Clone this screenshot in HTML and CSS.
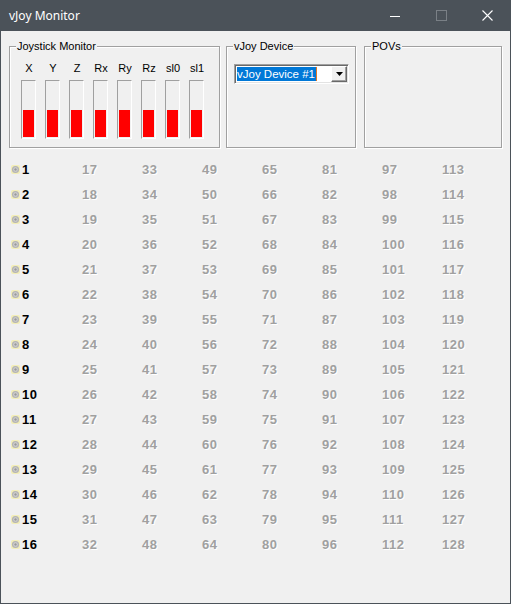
FILE: index.html
```html
<!DOCTYPE html>
<html>
<head>
<meta charset="utf-8">
<link rel="stylesheet" href="styles.css">
</head>
<body>
<div class="window">
  <div class="titlebar">
    <span class="title">vJoy Monitor</span>
    <div class="controls">
      <span class="ctl"><svg width="10" height="10" viewBox="0 0 10 10"><line x1="0" y1="5.5" x2="10" y2="5.5" stroke="#fff" stroke-width="1"/></svg></span>
      <span class="ctl"><svg width="11" height="11" viewBox="0 0 11 11"><rect x="0.5" y="0.5" width="10" height="10" fill="none" stroke="#7a8086" stroke-width="1"/></svg></span>
      <span class="ctl"><svg width="11" height="11" viewBox="0 0 11 11"><path d="M0.5 0.5 L10.5 10.5 M10.5 0.5 L0.5 10.5" stroke="#fff" stroke-width="1.1"/></svg></span>
    </div>
  </div>
  <div class="client">
    <div class="groups">
      <div class="group g-joy">
        <div class="legend">Joystick Monitor</div>
        <div class="axes">
          <div class="axis"><span class="axis-name">X</span><div class="bar"><div class="fill" style="height:27px"></div></div></div>
          <div class="axis"><span class="axis-name">Y</span><div class="bar"><div class="fill" style="height:27px"></div></div></div>
          <div class="axis"><span class="axis-name">Z</span><div class="bar"><div class="fill" style="height:27px"></div></div></div>
          <div class="axis"><span class="axis-name">Rx</span><div class="bar"><div class="fill" style="height:27px"></div></div></div>
          <div class="axis"><span class="axis-name">Ry</span><div class="bar"><div class="fill" style="height:27px"></div></div></div>
          <div class="axis"><span class="axis-name">Rz</span><div class="bar"><div class="fill" style="height:27px"></div></div></div>
          <div class="axis"><span class="axis-name">sl0</span><div class="bar"><div class="fill" style="height:27px"></div></div></div>
          <div class="axis"><span class="axis-name">sl1</span><div class="bar"><div class="fill" style="height:27px"></div></div></div>
        </div>
      </div>
      <div class="group g-dev">
        <div class="legend">vJoy Device</div>
        <div class="combo">
          <div class="combo-field"><span class="sel">vJoy Device #1</span><span class="caret"></span></div>
          <div class="combo-btn"><svg width="7" height="4" viewBox="0 0 7 4"><path d="M0 0 H7 L3.5 4 Z" fill="#000"/></svg></div>
        </div>
      </div>
      <div class="group g-pov">
        <div class="legend">POVs</div>
      </div>
    </div>
    <div class="buttons" id="buttons"></div>
  </div>
</div>
<script src="app.js"></script>
</body>
</html>
```

FILE: app.js
```js
(function () {
  var grid = document.getElementById('buttons');
  var icon = '<svg class="led" width="9" height="9" viewBox="0 0 9 9">' +
    '<rect x="0" y="0" width="9" height="9" rx="2" fill="#f3eeb8"/>' +
    '<circle cx="4.5" cy="4.5" r="3.6" fill="#b4b4b4"/>' +
    '<circle cx="4.5" cy="4.5" r="2.2" fill="#d2d2d2"/>' +
    '<circle cx="4.5" cy="4.5" r="1.2" fill="#9a9a9a"/></svg>';
  var html = '';
  for (var i = 1; i <= 128; i++) {
    var on = i <= 16;
    html += '<div class="btn' + (on ? ' on' : ' off') + '">' +
      '<span class="led-slot">' + (on ? icon : '') + '</span>' +
      '<span class="num">' + i + '</span></div>';
  }
  grid.innerHTML = html;
})();
```

FILE: styles.css
```css
* { box-sizing: border-box; }
html, body { margin: 0; padding: 0; }
body {
  width: 511px;
  height: 604px;
  overflow: hidden;
  background: #f0f0f0;
  font-family: "Liberation Sans", Arial, sans-serif;
  font-size: 11px;
  color: #000;
}
.window {
  width: 511px;
  height: 604px;
  border: 1px solid #4b5259;
  border-top: 0;
  background: #f0f0f0;
  display: flex;
  flex-direction: column;
}
.titlebar {
  height: 31px;
  margin: 0 -1px;
  background: #4b5259;
  display: flex;
  align-items: center;
  padding-left: 9px;
}
.title {
  color: #fff;
  font-family: "Noto Sans", "Open Sans", sans-serif;
  font-size: 12px;
  line-height: 16px;
}
.controls {
  margin-left: auto;
  display: flex;
  height: 31px;
  margin-right: 1px;
}
.ctl {
  width: 46px;
  height: 31px;
  display: flex;
  align-items: center;
  justify-content: center;
}
.ctl svg { display: block; }

.client {
  flex: 1;
}
.groups {
  display: flex;
  padding-left: 8px;
  margin-top: 15px;
}
.group {
  height: 102px;
  border: 1px solid #a0a0a0;
  box-shadow: inset 1px 1px 0 #fff, 1px 1px 0 #fff;
}
.g-joy { width: 211px; }
.g-dev { width: 130px; margin-left: 6px; }
.g-pov { width: 138px; margin-left: 8px; }
.legend {
  width: fit-content;
  margin-top: -7px;
  margin-left: 6px;
  padding: 0 1px;
  line-height: 13px;
  background: #f0f0f0;
  font-size: 11px;
}

.axes {
  display: grid;
  grid-template-columns: repeat(8, 24px);
  margin-top: 9px;
  margin-left: 7px;
}
.axis {
  display: flex;
  flex-direction: column;
  align-items: center;
}
.axis-name {
  line-height: 13px;
  font-size: 11px;
}
.bar {
  width: 15px;
  height: 59px;
  margin-top: 5px;
  margin-left: -1px;
  border-top: 1px solid #a0a0a0;
  border-left: 1px solid #a0a0a0;
  border-right: 1px solid #fff;
  border-bottom: 1px solid #fff;
  padding: 1px;
  display: flex;
  flex-direction: column;
  justify-content: flex-end;
}
.fill {
  background: #ff0000;
  width: 100%;
}

.combo {
  margin-top: 11px;
  margin-left: 7px;
  width: 115px;
  height: 20px;
  display: flex;
  border-top: 1px solid #a0a0a0;
  border-left: 1px solid #a0a0a0;
  border-right: 1px solid #fff;
  border-bottom: 1px solid #fff;
  box-shadow: inset 1px 1px 0 #696969, inset -1px -1px 0 #e3e3e3;
  background: #fff;
  padding: 1px;
}
.combo-field {
  flex: 1;
  display: flex;
  align-items: center;
  padding-left: 1px;
}
.sel {
  background: #0078d7;
  color: #fff;
  font-size: 11.5px;
  line-height: 14px;
  padding: 0 1px 0 0;
}
.caret {
  width: 1px;
  height: 14px;
  background: #e07828;
}
.combo-btn {
  width: 16px;
  height: 16px;
  background: #f0f0f0;
  border-top: 1px solid #fff;
  border-left: 1px solid #fff;
  border-right: 1px solid #696969;
  border-bottom: 1px solid #696969;
  box-shadow: inset -1px -1px 0 #a0a0a0;
  display: flex;
  align-items: center;
  justify-content: center;
}
.combo-btn svg { display: block; }

.buttons {
  display: grid;
  grid-template-columns: repeat(8, 60px);
  grid-template-rows: repeat(16, 25px);
  grid-auto-flow: column;
  margin-top: 9px;
  padding-left: 10px;
}
.btn {
  display: flex;
  align-items: center;
  height: 25px;
}
.led-slot {
  width: 9px;
  height: 9px;
  margin-right: 2px;
  display: block;
  flex: none;
}
.led { display: block; }
.num {
  font-family: "Liberation Sans", Arial, sans-serif;
  font-weight: bold;
  font-size: 13px;
  letter-spacing: 0.5px;
  line-height: 25px;
}
.btn.on .num { color: #000; }
.btn.off .num {
  color: #a0a0a0;
  text-shadow: 1px 1px 0 #fff;
}
```
